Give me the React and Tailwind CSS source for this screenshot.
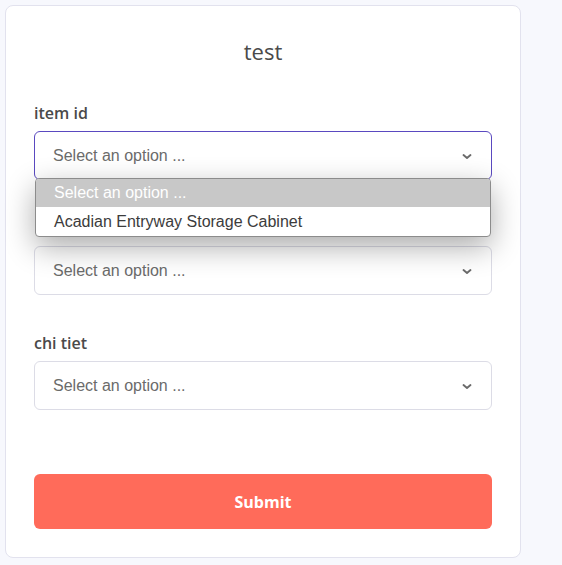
import React from "react";

function Chevron() {
  return (
    <svg width="10" height="7" viewBox="0 0 10 7" fill="none" className="shrink-0 mt-[1px]">
      <polyline points="1.5,2 5,5 8.5,2" stroke="#6b6b6b" strokeWidth="1.9" strokeLinecap="round" strokeLinejoin="round" />
    </svg>
  );
}

function Select({ focused }) {
  return (
    <div
      className={
        "h-[49px] rounded-[6px] border bg-white flex items-center justify-between pl-[18px] pr-[19px] " +
        (focused ? "border-[#5a49c0]" : "border-[#dcdce6]")
      }
    >
      <span className="text-[16px] text-[#6b6b6b] font-['Liberation_Sans',Arial,sans-serif]">Select an option ...</span>
      <Chevron />
    </div>
  );
}

function Label({ children }) {
  return (
    <div className="h-[24px] leading-[24px] mb-[6px] text-[16px] font-semibold text-[#4a4a4a] font-['Open_Sans',sans-serif]">
      {children}
    </div>
  );
}

export default function App() {
  return (
    <div className="min-h-[565px] bg-[#f7f8fd] p-[5px]">
      <div className="w-[516px] bg-white border border-[#e2e2ee] rounded-[8px] px-[28px] pt-[29px] pb-[28px]">
        <div className="text-center text-[22px] leading-[32px] text-[#4a4a4a] font-['Open_Sans',sans-serif]">test</div>
        <div className="mt-[34px]">
          <Label>item id</Label>
          <div className="relative">
            <Select focused />
            <div className="absolute left-[1px] right-[1px] top-[47px] z-10 rounded-[4px] border border-[#8c8c8c] bg-white overflow-hidden shadow-[0_10px_30px_rgba(0,0,0,0.33)] font-['Liberation_Sans',Arial,sans-serif] text-[16px]">
              <div className="h-[28px] leading-[28px] pl-[18px] bg-[#c8c8c8] text-white">Select an option ...</div>
              <div className="h-[29px] leading-[29px] pl-[18px] text-[#3c3c3c]">Acadian Entryway Storage Cabinet</div>
            </div>
          </div>
        </div>
        <div className="mt-[36px]">
          <Label>{""}</Label>
          <Select />
        </div>
        <div className="mt-[36px]">
          <Label>chi tiet</Label>
          <Select />
        </div>
        <button className="mt-[64px] w-full h-[55px] rounded-[6px] bg-[#ff6b5a] text-white text-[16px] font-bold font-['Open_Sans',sans-serif]">
          Submit
        </button>
      </div>
    </div>
  );
}
